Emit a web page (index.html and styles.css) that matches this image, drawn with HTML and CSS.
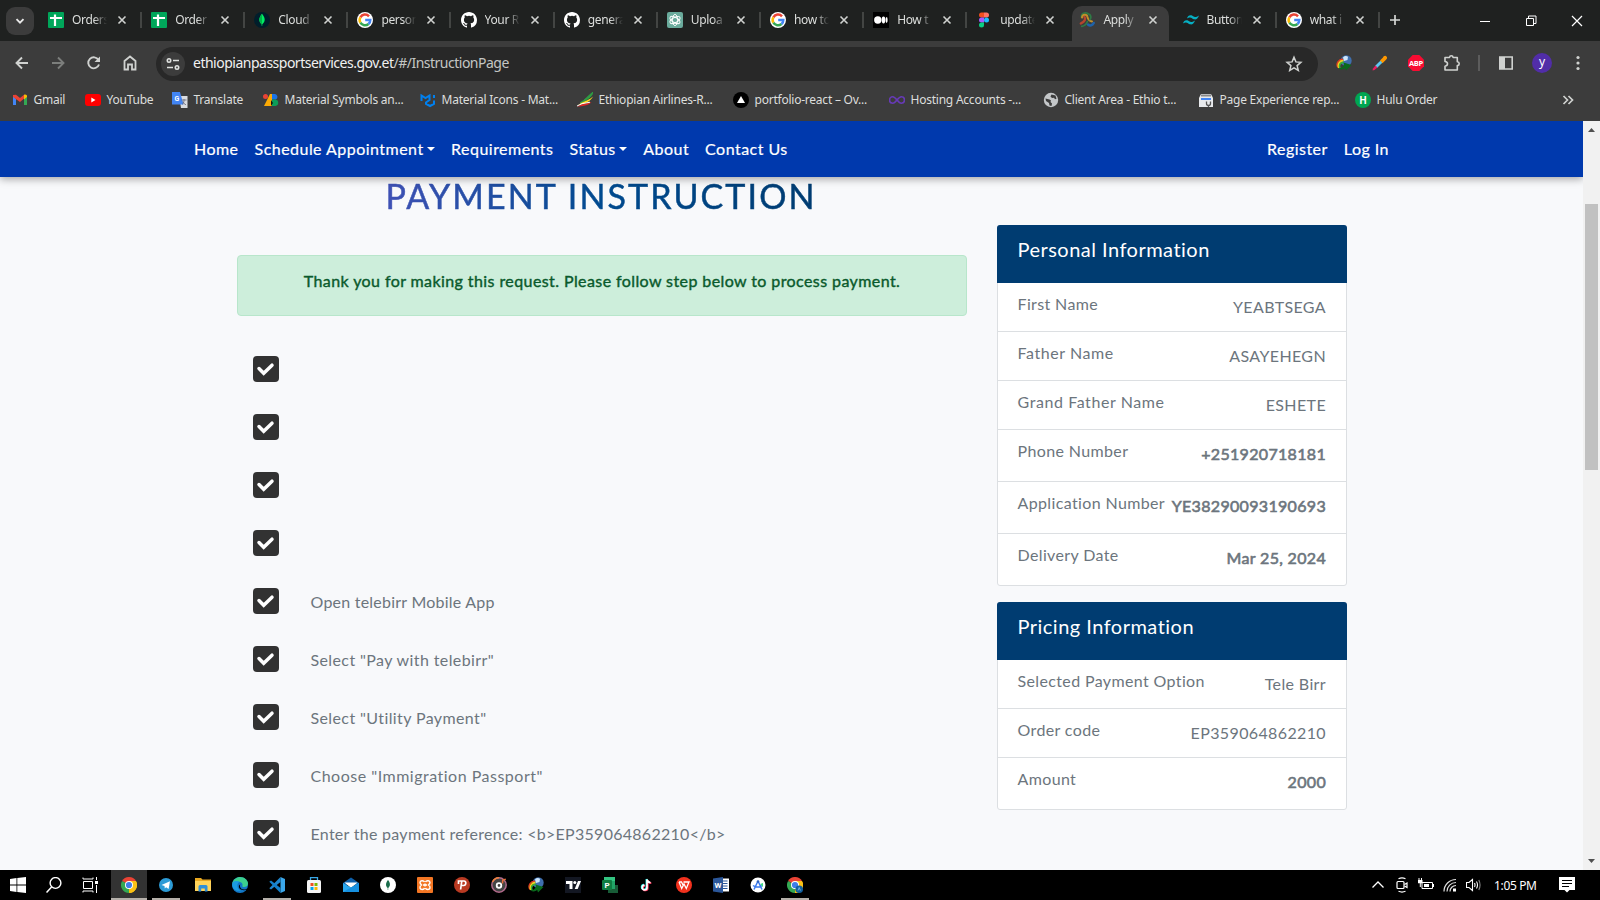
FILE: index.html
```html
<!DOCTYPE html>
<html lang="en">
<head>
<meta charset="utf-8">
<title>Apply</title>
<link rel="stylesheet" href="styles.css">
</head>
<body>
<svg class="defs" width="0" height="0">
  <symbol id="x" viewBox="0 0 10 10"><path d="M1.5 1.5l7 7M8.500 1.500l-7 7" fill="none" stroke="#d0d2d0" stroke-width="1.6"/></symbol>
  <symbol id="sheet" viewBox="0 0 16 16"><rect width="16" height="16" rx="1" fill="#00a65a"/><path d="M2 6h12M7 2.500v11.500" stroke="#fff" stroke-width="2.200"/></symbol>
  <symbol id="google" viewBox="0 0 16 16"><circle cx="8" cy="8" r="8" fill="#fff"/><g fill="none" stroke-width="2.500"><path d="M12 4.300A5.300 5.300 0 0 0 3.400 5.300" stroke="#ea4335"/><path d="M3.400 5.300A5.300 5.300 0 0 0 3.400 10.700" stroke="#fbbc05"/><path d="M3.400 10.700A5.300 5.300 0 0 0 11.500 12" stroke="#34a853"/><path d="M11.500 12A5.300 5.300 0 0 0 13.300 8H8.200" stroke="#4285f4"/></g></symbol>
  <symbol id="github" viewBox="0 0 16 16"><path fill="#fff" d="M8 0C3.580 0 0 3.580 0 8c0 3.540 2.290 6.530 5.470 7.590.4.070.55-.17.55-.38 0-.19-.01-.82-.01-1.490-2.010.37-2.530-.49-2.690-.94-.09-.23-.48-.94-.82-1.130-.28-.15-.68-.52-.01-.53.63-.01 1.080.58 1.230.82.72 1.210 1.870.87 2.330.66.070-.52.28-.87.51-1.070-1.780-.2-3.640-.89-3.640-3.950 0-.87.31-1.590.82-2.150-.08-.2-.36-1.020.08-2.120 0 0 .67-.21 2.200.82a7.400 7.400 0 0 1 4 0c1.530-1.040 2.200-.82 2.200-.82.44 1.100.16 1.920.08 2.120.51.56.82 1.270.82 2.150 0 3.070-1.870 3.750-3.650 3.950.29.25.54.73.54 1.480 0 1.070-.01 1.930-.01 2.200 0 .21.15.46.55.38A8 8 0 0 0 16 8c0-4.420-3.580-8-8-8z"/></symbol>
  <symbol id="mongo" viewBox="0 0 16 16"><circle cx="8" cy="8" r="8" fill="#001e2b"/><path d="M8 1.800c3.800 4.500 3.400 8 .2 10.600V14h-.5v-1.600C4.600 9.800 4.300 6.200 8 1.800z" fill="#00ed64"/><path d="M8 2v10.500C4.800 9.800 4.500 6.200 8 2z" fill="#00b34a"/></symbol>
  <symbol id="gpt" viewBox="0 0 16 16"><rect width="16" height="16" rx="2" fill="#6aab9c"/><g fill="none" stroke="#fff" stroke-width=".9"><ellipse cx="8" cy="8" rx="2.600" ry="5.600"/><ellipse cx="8" cy="8" rx="2.600" ry="5.600" transform="rotate(60 8 8)"/><ellipse cx="8" cy="8" rx="2.600" ry="5.600" transform="rotate(120 8 8)"/></g></symbol>
  <symbol id="medium" viewBox="0 0 16 16"><rect width="16" height="16" fill="#000"/><circle cx="4.800" cy="8" r="3.700" fill="#fff"/><ellipse cx="10.500" cy="8" rx="1.800" ry="3.400" fill="#fff"/><ellipse cx="13.600" cy="8" rx="1" ry="3" fill="#fff"/></symbol>
  <symbol id="figma" viewBox="0 0 16 16"><path d="M8 .5H5.500a2.500 2.500 0 0 0 0 5H8z" fill="#f24e1e"/><path d="M8 .5h2.500a2.500 2.500 0 0 1 0 5H8z" fill="#ff7262"/><path d="M8 5.500H5.500a2.500 2.500 0 0 0 0 5H8z" fill="#a259ff"/><circle cx="10.500" cy="8" r="2.500" fill="#1abcfe"/><path d="M8 10.500H5.500A2.500 2.500 0 1 0 8 13z" fill="#0acf83"/></symbol>
  <symbol id="apply" viewBox="0 0 16 16"><g fill="none" stroke-linecap="round" stroke-linejoin="round"><path d="M2.500 5.500C2 0 8 0 10 2.500" stroke="#2f7a45" stroke-width="1.700"/><path d="M3 5.500C3.500 2 8 2 8.500 5c.5 2.500 1 3.500 4.500 4.500" stroke="#c08f2a" stroke-width="2"/><path d="M5.500 5C7 7 6 9 1.800 11.500" stroke="#b6452d" stroke-width="2.400"/><path d="M10.800 2.500c1.500 2 1.300 3.500.2 5M2.800 14.300C6 14 7.500 12 8.500 9.500" stroke="#2f7a45" stroke-width="1.700"/><path d="M9 12.500c2 1.700 4.500 1 5.700-1.500" stroke="#1f62a8" stroke-width="2.500"/></g></symbol>
  <symbol id="tailwind" viewBox="0 0 16 16"><path d="M4 6.500C4.800 3.800 6.300 2.800 8.500 3.300c2 .5 2.500 3.700 7.500.2-1.200 3.500-3 4.300-5 3.800-2.200-.6-3-3.300-7-.8zM0 11.500c.8-2.700 2.300-3.700 4.500-3.200 2 .5 2.500 3.700 7.500.2-1.200 3.500-3 4.300-5 3.800-2.200-.6-3-3.300-7-.8z" fill="#06b0c4"/></symbol>
  <symbol id="idm" viewBox="0 0 16 16"><circle cx="10.200" cy="5.700" r="5.500" fill="#3f6fae"/><path d="M7 2.500a4 4 0 0 1 5-.8L11.500 5 8 6z" fill="#cfe6fb"/><g fill="none"><path d="M1.800 12.500C-.5 8 3 4 7 4.300" stroke="#e23a21" stroke-width="1.400"/><path d="M3 12.800C1 9 4 5.500 7.500 5.700" stroke="#f4d01c" stroke-width="1.800"/><path d="M4 13.200C2.500 10 4.500 7.300 8 7.200" stroke="#35b23a" stroke-width="1.500"/></g><path d="M2.500 13.500C5 13.500 7 12 8 9.500L7.500 7.500l8 2.500-5.500 5.500-.8-2.500C7.500 14.500 5 15 2.500 13.500z" fill="#0a6a1c"/></symbol>
  <symbol id="chrome" viewBox="0 0 16 16"><path d="M8 8L1.070 4A8 8 0 0 1 14.930 4z" fill="#ea4335"/><path d="M8 8l6.930-4A8 8 0 0 1 8 16z" fill="#fbbc05"/><path d="M8 8v8A8 8 0 0 1 1.070 4z" fill="#34a853"/><path d="M8 4h6.930A8 8 0 0 1 8 16l3.500-6z" fill="#fbc116"/><circle cx="8" cy="8" r="4" fill="#fff"/><circle cx="8" cy="8" r="3.100" fill="#3f7ee8"/></symbol>
  <symbol id="check" viewBox="0 0 26 26"><rect width="26" height="26" rx="4" fill="#323232"/><path d="M6 12.500l4.700 4.700 8.300-8" fill="none" stroke="#fff" stroke-width="3.500" stroke-linecap="round"/></symbol>
</svg>

<header class="chrome">
  <div class="tabstrip">
    <div class="tabsearch"><svg width="12" height="12" viewBox="0 0 12 12"><path d="M2.500 4.200L6 7.700l3.500-3.500" fill="none" stroke="#e8e8e8" stroke-width="1.900"/></svg></div>
    <div class="tabs">
      <div class="tab"><svg class="fav"><use href="#sheet"/></svg><span class="tt">Orders</span><svg class="tx"><use href="#x"/></svg></div>
      <div class="tab"><svg class="fav"><use href="#sheet"/></svg><span class="tt">Order</span><svg class="tx"><use href="#x"/></svg></div>
      <div class="tab"><svg class="fav"><use href="#mongo"/></svg><span class="tt">Cloud</span><svg class="tx"><use href="#x"/></svg></div>
      <div class="tab"><svg class="fav"><use href="#google"/></svg><span class="tt">person</span><svg class="tx"><use href="#x"/></svg></div>
      <div class="tab"><svg class="fav"><use href="#github"/></svg><span class="tt">Your R</span><svg class="tx"><use href="#x"/></svg></div>
      <div class="tab"><svg class="fav"><use href="#github"/></svg><span class="tt">genera</span><svg class="tx"><use href="#x"/></svg></div>
      <div class="tab"><svg class="fav"><use href="#gpt"/></svg><span class="tt">Uploa</span><svg class="tx"><use href="#x"/></svg></div>
      <div class="tab"><svg class="fav"><use href="#google"/></svg><span class="tt">how to</span><svg class="tx"><use href="#x"/></svg></div>
      <div class="tab"><svg class="fav"><use href="#medium"/></svg><span class="tt">How t</span><svg class="tx"><use href="#x"/></svg></div>
      <div class="tab nosep"><svg class="fav"><use href="#figma"/></svg><span class="tt">update</span><svg class="tx"><use href="#x"/></svg></div>
      <div class="tab active"><svg class="fav"><use href="#apply"/></svg><span class="tt">Apply</span><svg class="tx"><use href="#x"/></svg></div>
      <div class="tab"><svg class="fav"><use href="#tailwind"/></svg><span class="tt">Button</span><svg class="tx"><use href="#x"/></svg></div>
      <div class="tab"><svg class="fav"><use href="#google"/></svg><span class="tt">what i</span><svg class="tx"><use href="#x"/></svg></div>
    </div>
    <svg class="plus" width="12" height="12" viewBox="0 0 12 12"><path d="M6 1v10M1 6h10" stroke="#d5d7d5" stroke-width="1.700"/></svg>
    <div class="winctl">
      <svg width="46" height="41" viewBox="0 0 46 41"><path d="M18 21.500h10" stroke="#fff"/></svg>
      <svg width="46" height="41" viewBox="0 0 46 41"><path d="M18.500 18.500h7v7h-7zM20.500 18.500v-2.500h7.500v7.500h-2.500" fill="none" stroke="#fff"/></svg>
      <svg width="46" height="41" viewBox="0 0 46 41"><path d="M18 16l10 10M28 16L18 26" stroke="#fff" stroke-width="1.200"/></svg>
    </div>
  </div>

  <div class="toolbar">
    <svg class="tb" viewBox="0 0 36 34"><path d="M28 17H17M22 11.500L16.500 17l5.500 5.500" fill="none" stroke="#d0d2d0" stroke-width="1.900"/></svg>
    <svg class="tb" viewBox="0 0 36 34"><path d="M16 17h11M22 11.500l5.500 5.500-5.500 5.500" fill="none" stroke="#7c7e7c" stroke-width="1.900"/></svg>
    <svg class="tb" viewBox="0 0 36 34"><path d="M26.500 14A5.500 5.500 0 1 0 27 18.500" fill="none" stroke="#d0d2d0" stroke-width="1.900"/><path d="M28 10.500v5.500h-5.500z" fill="#d0d2d0"/></svg>
    <svg class="tb" viewBox="0 0 36 34"><path d="M16.500 23.500v-8.500l5.500-4.500 5.500 4.500v8.500h-3.500v-5h-4v5z" fill="none" stroke="#d0d2d0" stroke-width="1.800"/></svg>
    <div class="omnibox">
      <div class="siteinfo"><svg width="14" height="14" viewBox="0 0 14 14" fill="none" stroke="#e0e2e0" stroke-width="1.600"><circle cx="3" cy="3.500" r="1.700"/><path d="M7 3.500h6M1 10.500h6"/><circle cx="11" cy="10.500" r="1.700"/></svg></div>
      <span class="url"><b>ethiopianpassportservices.gov.et</b>/#/InstructionPage</span>
      <svg class="star" width="18" height="18" viewBox="0 0 18 18"><path d="M9 2.200l1.900 4.700 5 .4-3.800 3.300 1.200 4.900L9 12.800l-4.300 2.700 1.200-4.900L2.100 7.300l5-.4z" fill="none" stroke="#d0d2d0" stroke-width="1.500"/></svg>
    </div>
    <div class="exts">
      <svg class="ext"><use href="#idm"/></svg>
      <svg class="ext" viewBox="0 0 16 16"><path d="M14.500 1.500c-1.500-1.500-3 0-3.500 1L8 5.500l2.500 2.700 3.500-3.500c1-1 1.500-2 .5-3.200z" fill="#ff9800"/><path d="M8.300 5.800l2 2L5 13l-2-2z" fill="#5ec8f2"/><path d="M3.500 10.500l2 2-3 2.500-2 .5.500-2z" fill="#e91e63"/></svg>
      <svg class="ext" viewBox="0 0 16 16"><path d="M4.700 0h6.600L16 4.700v6.600L11.300 16H4.700L0 11.300V4.700z" fill="#f80c32"/><text x="8" y="10.700" class="abp">ABP</text></svg>
      <svg class="ext" viewBox="0 0 16 16"><path d="M1 2.500h4.500q.2-1.700 1.800-1.700t1.800 1.700h4.200v4.300q1.900.2 1.900 1.900t-1.900 1.900V15H1v-3.800q2.500-.3 2.500-2.400T1 6.500z" fill="none" stroke="#d0d2d0" stroke-width="1.600" stroke-linejoin="round"/></svg>
      <i class="bar"></i>
      <svg class="ext side" viewBox="0 0 16 16"><path d="M1.800 2h12.400v12H1.800z" fill="none" stroke="#d0d2d0" stroke-width="1.600"/><path d="M1.800 2h5.200v12H1.800z" fill="#d0d2d0"/></svg>
      <div class="avatar">y</div>
      <svg class="ext" viewBox="0 0 16 16" fill="#d0d2d0"><circle cx="8" cy="2.500" r="1.600"/><circle cx="8" cy="8" r="1.600"/><circle cx="8" cy="13.500" r="1.600"/></svg>
    </div>
  </div>

  <div class="bookmarks">
    <div class="bm"><svg viewBox="0 0 16 16"><path d="M1 3.500v9.500h3V7z" fill="#4285f4"/><path d="M15 3.500v9.500h-3V7z" fill="#34a853"/><path d="M1 3l3-.3L8 6l4-3.300 1 3L8 10 1 5z" fill="#ea4335"/><path d="M12 2.700c2-.7 3 .3 3 1.600V5l-3 2.400z" fill="#fbbc05"/></svg><span>Gmail</span></div>
    <div class="bm"><svg viewBox="0 0 16 16"><rect y="2" width="16" height="12" rx="3" fill="#f00"/><path d="M6.300 5.600L10.500 8l-4.200 2.400z" fill="#fff"/></svg><span>YouTube</span></div>
    <div class="bm"><svg viewBox="0 0 16 16"><path d="M7 4h8.500v12H9z" fill="#dadce0"/><path d="M0 0h8l3.500 12.500H0z" fill="#4285f4"/><text x="4.700" y="8.800" class="gt">G</text><path d="M9.500 8h5M12 7v1.500c0 2-1 3.500-2 4M10.800 9.500c.5 1.500 2 3 3.200 3.200" stroke="#667" stroke-width=".8" fill="none"/></svg><span>Translate</span></div>
    <div class="bm"><svg viewBox="0 0 16 16"><circle cx="2.500" cy="4.500" r="2.500" fill="#ea4335"/><path d="M1 14L7 2h2v12z" fill="#fbaa05"/><path d="M9 2h3a3 3 0 0 1 1 5.500H9z" fill="#1a73e8"/><path d="M9 7.500h3.500a3.300 3.300 0 0 1 0 6.500H9z" fill="#0d9d58"/><path d="M8 8l2 3-2 3z" fill="#111"/></svg><span>Material Symbols an...</span></div>
    <div class="bm"><svg viewBox="0 0 16 16" fill="none" stroke="#0080ef" stroke-width="2"><path d="M1.500 9V3.500l4 2.500 4-2.500V8L6 10.500v1.500l4 2 4-2.200V8.500M14 3v3"/></svg><span>Material Icons - Mat...</span></div>
    <div class="bm"><svg viewBox="0 0 16 16"><path d="M16 0C15 5 10 8 3 11 8 8 12 3 16 0z" fill="#2f9e44" stroke="#2f9e44"/><path d="M16 4.500C14 9 8 12 1 13L5 10.500c4-1.500 8-3 11-6z" fill="#ffe01b"/><path d="M14.500 10C12 13.500 5 14.500 0 14.500l5-2.500c3-.3 6-1 9.500-2z" fill="#d62828"/><path d="M0 14l5-2.300 8-1.500" fill="none" stroke="#fff"/></svg><span>Ethiopian Airlines-R...</span></div>
    <div class="bm"><svg viewBox="0 0 16 16"><circle cx="8" cy="8" r="8" fill="#000"/><path d="M8 4l4 7H4z" fill="#fff"/></svg><span>portfolio-react – Ov...</span></div>
    <div class="bm"><svg viewBox="0 0 16 16"><path d="M8 8C6 5.500 5 4.800 3.700 4.800a3.200 3.200 0 0 0 0 6.400C5 11.200 6 10.500 8 8s3-3.200 4.300-3.200a3.200 3.200 0 0 1 0 6.400C11 11.200 10 10.500 8 8z" fill="none" stroke="#673ab7" stroke-width="1.600"/></svg><span>Hosting Accounts -...</span></div>
    <div class="bm"><svg viewBox="0 0 16 16"><circle cx="8" cy="8" r="7.200" fill="#c4c7c9"/><path d="M2.500 6.500l4 1 1.500 1-.5 1.500 1.500 1.500-.5 2.500-2-.5-.5-2.500L3 9zM8.500 2.500l-1 2 1.500 1.500 2-.3 1 1.500 1.500-.5-1-3.200z" fill="#3c3c3c"/></svg><span>Client Area - Ethio t...</span></div>
    <div class="bm"><svg viewBox="0 0 16 16"><path d="M3 2h10l2 4v9H1V6z" fill="#e8eaed"/><path d="M3 2.500h10v2H3z" fill="#888"/><path d="M3 6h10v2H3z" fill="#4285f4"/><path d="M8.500 9.500v2a2 2 0 0 0 4 0v-2M10.500 13v2" fill="none" stroke="#555" stroke-width="1.300"/></svg><span>Page Experience rep...</span></div>
    <div class="bm"><svg viewBox="0 0 16 16"><circle cx="8" cy="8" r="8" fill="#00a651"/><text x="8" y="11.700" class="hh">H</text></svg><span>Hulu Order</span></div>
    <svg class="more" width="12" height="10" viewBox="0 0 12 10"><path d="M1.500 1l4 4-4 4M6.500 1l4 4-4 4" fill="none" stroke="#d0d2d0" stroke-width="1.700"/></svg>
  </div>
</header>

<div class="viewport">
  <div class="page">
    <nav class="nav">
      <div class="left"><a>Home</a><a class="drop">Schedule Appointment</a><a>Requirements</a><a class="drop">Status</a><a>About</a><a>Contact Us</a></div>
      <div class="right"><a>Register</a><a>Log In</a></div>
    </nav>
    <div class="content">
      <main>
        <h1><span>PAYMENT INSTRUCTION</span></h1>
        <div class="alert"><span>Thank you for making this request. Please follow step below to process payment.</span></div>
        <ul class="steps">
          <li><svg><use href="#check"/></svg></li>
          <li><svg><use href="#check"/></svg></li>
          <li><svg><use href="#check"/></svg></li>
          <li><svg><use href="#check"/></svg></li>
          <li class="tight"><svg><use href="#check"/></svg><span>Open telebirr Mobile App</span></li>
          <li><svg><use href="#check"/></svg><span>Select "Pay with telebirr"</span></li>
          <li><svg><use href="#check"/></svg><span>Select "Utility Payment"</span></li>
          <li class="loose"><svg><use href="#check"/></svg><span>Choose "Immigration Passport"</span></li>
          <li class="snug"><svg><use href="#check"/></svg><span>Enter the payment reference: &lt;b&gt;EP359064862210&lt;/b&gt;</span></li>
        </ul>
      </main>
      <aside>
        <section class="card">
          <h2>Personal Information</h2>
          <div class="row"><span>First Name</span><em>YEABTSEGA</em></div>
          <div class="row"><span class="loose">Father Name</span><em>ASAYEHEGN</em></div>
          <div class="row"><span class="loose">Grand Father Name</span><em>ESHETE</em></div>
          <div class="row tall"><span>Phone Number</span><strong>+251920718181</strong></div>
          <div class="row tall"><span>Application Number</span><strong>YE38290093190693</strong></div>
          <div class="row tall"><span>Delivery Date</span><strong>Mar 25, 2024</strong></div>
        </section>
        <section class="card">
          <h2>Pricing Information</h2>
          <div class="row"><span>Selected Payment Option</span><em>Tele Birr</em></div>
          <div class="row"><span>Order code</span><em>EP359064862210</em></div>
          <div class="row tall"><span>Amount</span><strong>2000</strong></div>
        </section>
      </aside>
    </div>
  </div>
  <div class="scroll">
    <svg width="17" height="17" viewBox="0 0 17 17"><path d="M5 11h7L8.500 7z" fill="#505050"/></svg>
    <div class="track"><div class="thumb"></div></div>
    <svg width="17" height="17" viewBox="0 0 17 17"><path d="M5 6h7l-3.500 4z" fill="#505050"/></svg>
  </div>
</div>

<footer class="taskbar">
  <div class="sys">
    <svg viewBox="0 0 16 16"><path d="M0 2l6.500-1v6.500H0zM7.300.9L16 0v7.500H7.300zM0 8.500h6.500V15L0 14zM7.300 8.500H16V16l-8.700-1.100z" fill="#fff"/></svg>
    <svg viewBox="0 0 16 16"><circle cx="9.500" cy="6" r="5.400" fill="none" stroke="#fff" stroke-width="1.400"/><path d="M5.600 10L.5 15.500" stroke="#fff" stroke-width="1.500"/></svg>
    <svg viewBox="0 0 16 16" fill="none" stroke="#fff"><path d="M1.500 4.500h9v7h-9zM1 .5v1.500h10V.5M1 15.500V14h10v1.500M14.500 0v3M14.500 8v8"/><path d="M13 4h3v3h-3z" fill="#fff" stroke="none"/></svg>
  </div>
  <div class="apps">
    <div class="app on"><svg><use href="#chrome"/></svg></div>
    <div class="app run"><svg viewBox="0 0 16 16"><circle cx="8" cy="8" r="7" fill="#2c9bd6"/><path d="M3.500 8l8.500-3.700-1.400 7.700-2.500-1.800-1.300 1.300-.3-2.500z" fill="#fff"/></svg></div>
    <div class="app"><svg viewBox="0 0 16 16"><path d="M0 1h6l1.500 1.500H16V14H0z" fill="#e9a820"/><path d="M0 4h16v10H0z" fill="#ffd35a"/><path d="M3.500 14.500V9.500q0-1.500 1.500-1.500h6q1.500 0 1.500 1.500v5h-2.700V11.500H6.200v3z" fill="#2f8fd8"/></svg></div>
    <div class="app"><svg viewBox="0 0 16 16"><circle cx="8" cy="8" r="8" fill="#1277c7"/><path d="M.2 7C1 2 5 0 8 0c5 0 8 3.500 8 6.500 0 2.500-2 3.500-4 3.500-1.500 0-2-.6-1.500-1.500C11 7 9.500 5 7 4.800 4 4.500 1 5 .2 7z" fill="#3bcf8e"/><path d="M.3 6.500C2 3 6 4 7.500 5 4.500 6 4.500 12 9 13.500 3 15-.5 11 .3 6.500z" fill="#1b9de2"/><path d="M8.500 7c-1.500 2 0 5.500 3.500 5.500 1.500 0 2.500-.5 3.500-1l-.8 1.200C11 14 6 12.500 7 8.500z" fill="#000"/></svg></div>
    <div class="app run"><svg viewBox="0 0 16 16"><path d="M11.500 0L16 2v12l-4.500 2z" fill="#3ba7ea"/><path d="M11.500 0v5L2 12.500.3 11.200z" fill="#1f87ce"/><path d="M11.500 16v-5L2 3.500.3 4.800z" fill="#1480cc"/></svg></div>
    <div class="app"><svg viewBox="0 0 16 16"><path d="M4.500 3.500V.7h7v2.800" fill="none" stroke="#38a8e8" stroke-width="1.300"/><rect x="1" y="3" width="14" height="13" rx="1.500" fill="#f4f4f4"/><path d="M4.500 6h3v3h-3z" fill="#f25022"/><path d="M8.500 6h3v3h-3z" fill="#7fba00"/><path d="M4.500 10h3v3h-3z" fill="#00a4ef"/><path d="M8.500 10h3v3h-3z" fill="#ffb900"/></svg></div>
    <div class="app"><svg viewBox="0 0 16 16"><path d="M0 6l8-5.500L16 6v2H0z" fill="#0d5ea8"/><path d="M1.500 5.500h13L8 11z" fill="#fff"/><path d="M0 6l8 4.500L16 6v9H0z" fill="#2aa8ef"/><path d="M0 15h16V6z" fill="#1690e0"/></svg></div>
    <div class="app"><svg viewBox="0 0 16 16"><circle cx="8" cy="8" r="8" fill="#fff"/><path d="M8 3c2.600 3 2.500 6 .2 8V13h-.5v-2C5.400 9 5.500 6 8 3z" fill="#176b4a"/></svg></div>
    <div class="app"><svg viewBox="0 0 16 16"><rect width="16" height="16" rx="1" fill="#f37623"/><path d="M8 6.500v3M7.500 5c-1-2-4.500-1.500-4.500.5 0 1 .5 1.500 1.500 2.500C3 9 2.800 9.500 3 11c.5 2 4 2 4.500 0M8.500 5c1-2 4.500-1.500 4.500.5 0 1-.5 1.500-1.500 2.500 1.500 1 1.700 1.500 1.500 3-.5 2-4 2-4.500 0M6 8h4" fill="none" stroke="#fff" stroke-width="1.400"/></svg></div>
    <div class="app"><svg viewBox="0 0 16 16"><circle cx="8" cy="8" r="8" fill="#b93a22"/><path d="M4.500 7V4h5.500c2.700 0 2.200 4.500-.3 4.500H8M7.800 4l-1.200 8.500" fill="none" stroke="#fff" stroke-width="1.700"/></svg></div>
    <div class="app"><svg viewBox="0 0 16 16"><circle cx="8" cy="8" r="7.200" fill="#444" stroke="#b16a8b" stroke-width="1.500"/><path d="M1.500 5A7.200 7.200 0 0 1 8 .8" stroke="#f0823c" stroke-width="1.500" fill="none"/><circle cx="8" cy="8.500" r="2.300" fill="none" stroke="#fff" stroke-width="1.800"/><path d="M11.500 6.500l.3-3.500 3-.8" stroke="#e96f3a" stroke-width="1.500" fill="none"/></svg></div>
    <div class="app"><svg><use href="#idm"/></svg></div>
    <div class="app"><svg viewBox="0 0 16 16"><path d="M0 0h16v16H0z" fill="#131722"/><path d="M1 4h6.500v8H4.500V7H1zM13 4h3l-3.300 8h-3z" fill="#fff"/><circle cx="9.800" cy="5.500" r="1.500" fill="#fff"/></svg></div>
    <div class="app"><svg viewBox="0 0 16 16"><path d="M2 0h11v10H2z" fill="#33c481"/><path d="M11 8h5v8H6v-4h5z" fill="#185c37"/><path d="M9 4h4v8H9z" fill="#21a366"/><rect y="3" width="10" height="10" rx="1" fill="#107c41"/><text x="5" y="11" class="ic">P</text></svg></div>
    <div class="app"><svg viewBox="0 0 16 16"><g fill="none" stroke-width="1.700"><path d="M8 2.500v8a2.400 2.400 0 1 1-2.500-2.400M8 2.500c.3 2 1.500 3 3.500 3" stroke="#25f4ee" transform="translate(-.6 -.5)"/><path d="M8 2.500v8a2.400 2.400 0 1 1-2.500-2.400M8 2.500c.3 2 1.500 3 3.500 3" stroke="#fe2c55" transform="translate(.8 .6)"/><path d="M8 2.500v8a2.400 2.400 0 1 1-2.500-2.400M8 2.500c.3 2 1.500 3 3.500 3" stroke="#fff"/></g></svg></div>
    <div class="app"><svg viewBox="0 0 16 16"><circle cx="8" cy="8" r="8" fill="#f2311d"/><path d="M3 5l2.700 6.500L8 7l2.300 4.500L13 5H7.500M3 5h2.500l1.700 3.500" fill="none" stroke="#fff" stroke-width="1.300"/></svg></div>
    <div class="app"><svg viewBox="0 0 16 16"><path d="M8 1.500h8v13H8z" fill="#fff"/><path d="M9.500 4H14.500M9.500 6.500H14.500M9.500 9H14.500M9.500 11.500H14.500" stroke="#2b579a"/><path d="M0 1.500L10 0v16L0 14.500z" fill="#2b579a"/><text x="5" y="11" class="ic">W</text></svg></div>
    <div class="app"><svg viewBox="0 0 16 16"><circle cx="8" cy="8" r="7.500" fill="#fff"/><path d="M8 4L4 12.500M8 4l4 8.500M3 8.500c2.500 2 7 2 9.500 0" fill="none" stroke="#3a7af0" stroke-width="1.500"/><circle cx="8" cy="4.500" r="1.300" fill="#2c62c0"/><path d="M10 7l3-1v4z" fill="#3ddc84"/></svg></div>
    <div class="app run"><svg viewBox="0 0 16 16"><use href="#chrome"/><circle cx="12.200" cy="12.200" r="3.800" fill="#12609f"/><path d="M11 13.500l1.200-3 1.200 3" fill="none" stroke="#7fc0f0" stroke-width=".8"/></svg></div>
  </div>
  <div class="tray">
    <svg viewBox="0 0 16 16"><path d="M2.500 10.500L8 5l5.500 5.500" fill="none" stroke="#fff" stroke-width="1.300"/></svg>
    <svg viewBox="0 0 16 16" fill="none" stroke="#fff" stroke-width="1.200"><rect x="3" y="4.500" width="7" height="7" rx="1"/><path d="M10.500 7.500l2.500-1.500v4.500l-2.500-1.500M4.500 1.700q3.500-1.500 7 0M4.500 14.300q3.500 1.500 7 0"/></svg>
    <svg viewBox="0 0 16 16"><path d="M4 5.500h10.500v6H4zM15.500 7v3" fill="none" stroke="#fff"/><path d="M6 7h5v3H6zM0 3h4.500v3.200H0z" fill="#fff"/><path d="M1 1v2M3.500 1v2M2.300 6v4" stroke="#fff"/></svg>
    <svg viewBox="0 0 16 16" fill="none" stroke="#ddd" stroke-width="1.200"><path d="M2 14.500A12 12 0 0 1 14 2.500M5 14.500A9 9 0 0 1 14 5.500M8 14.500A6 6 0 0 1 14 8.500"/><path d="M11 11.500h3v3h-3z" fill="#fff" stroke="none"/></svg>
    <svg viewBox="0 0 16 16" fill="none" stroke="#fff" stroke-width="1.100"><path d="M.5 5.500h2.500l3.500-3v11l-3.500-3H.5zM8.500 6q1 2 0 4M10.500 4.500q2 3.500 0 7"/><path d="M12.800 3q2.500 5 0 10" stroke="#888"/></svg>
    <span class="clock">1:05 PM</span>
    <svg class="note" viewBox="0 0 16 16"><path d="M0 0h16v13h-5.500L8 15.500 5.500 13H0z" fill="#fff"/><path d="M3 3.500h10M3 6.500h10M3 9.500h7" stroke="#000"/></svg>
  </div>
</footer>
</body>
</html>
```
FILE: styles.css
```css
* { box-sizing: border-box; }
body { margin: 0; width: 1600px; height: 900px; overflow: hidden; display: flex; flex-direction: column; font-family: "Noto Sans", sans-serif; background: #f8f9fb; }
svg { display: block; flex: none; }
.defs { position: absolute; }

.chrome { height: 121px; flex: none; background: #3c3c3c; color: #dcdedc; display: flex; flex-direction: column; }
.tabstrip { height: 41px; flex: none; background: #1f2120; display: flex; align-items: center; }
.tabsearch { width: 28px; height: 28px; margin-left: 6px; border-radius: 9px; background: #3c3c3c; display: flex; align-items: center; justify-content: center; }
.tabs { display: flex; height: 40px; margin: 0 0 1px 6px; width: 1341px; }
.tab { width: 103.15px; flex: none; height: 40px; padding-left: 8px; display: flex; align-items: center; position: relative; }
.tab::after { content: ""; width: 2px; height: 16px; background: #434543; margin-left: 13px; }
.tab.nosep::after, .tab.active::after { visibility: hidden; }
.fav { width: 16px; height: 16px; }
/* the label fades out before the close button */
.tt { width: 40px; margin-left: 8px; font-size: 12px; line-height: 20px; height: 20px; white-space: nowrap; overflow: hidden; letter-spacing: -.35px; -webkit-mask-image: linear-gradient(90deg, #000 22px, transparent 35px); }
.tx { width: 10px; height: 10px; margin-left: 5px; }
.tab.active::before { content: ""; position: absolute; left: 1px; top: 6px; width: 97px; height: 35px; background: #3c3c3c; border-radius: 10px 10px 0 0; z-index: 0; }
.tab.active > * { position: relative; z-index: 1; }
.plus { margin: 0 0 1px 7.500px; }
.winctl { display: flex; margin: 0 0 1px auto; }

.toolbar { height: 47px; flex: none; padding-top: 6px; display: flex; align-items: flex-start; }
.tb { width: 36px; height: 34px; margin-top: -1px; }
.omnibox { flex: none; margin-left: 12px; width: 1162px; height: 34px; border-radius: 17px; background: #282828; display: flex; align-items: center; padding: 0 15px 1px 5px; }
.siteinfo { width: 24px; height: 24px; border-radius: 50%; background: #3c3c3c; display: flex; align-items: center; justify-content: center; }
.url { margin: 0 0 1px 8px; font-size: 14px; line-height: 20px; letter-spacing: -.5px; color: #c4c6c4; white-space: nowrap; }
.url b { font-weight: 400; color: #f0f0f0; }
.star { margin-left: auto; }
.exts { display: flex; flex: none; width: 264px; align-items: center; height: 32px; margin-left: 18px; }
.ext { width: 16px; height: 16px; margin-right: 20px; }
.bar { width: 2px; height: 16px; flex: none; background: #5c5c5c; margin: 0 18px 0 -2px; }
.side { margin-right: 18px; }
.avatar { width: 20px; height: 20px; flex: none; border-radius: 50%; background: #512da8; color: #fff; font-size: 12px; line-height: 18px; text-align: center; margin-right: 18px; }
.abp { font: bold 7.500px "Open Sans", sans-serif; letter-spacing: -.3px; fill: #fff; text-anchor: middle; }
.gt { font: bold 7px Roboto, sans-serif; fill: #fff; text-anchor: middle; }
.hh { font: bold 10px Roboto, sans-serif; fill: #fff; text-anchor: middle; }
.ic { font: bold 8px Roboto, sans-serif; fill: #fff; text-anchor: middle; }

.bookmarks { height: 32px; margin-top: -4px; padding-left: 12px; display: grid; grid-template-columns: 73px 87px 91px 157px 157px 156px 156px 154px 155px 157px 1fr 38px; align-items: center; }
.bm { display: flex; align-items: center; gap: 5.500px; font-size: 12px; line-height: 18px; letter-spacing: -.23px; white-space: nowrap; }
.bm svg { width: 16px; height: 16px; }

.viewport { height: 749px; display: flex; flex: none; }
.page { width: 1583px; overflow: hidden; font-family: Lato, sans-serif; color: #6c757d; background: #f8f9fb; }
.nav { position: relative; z-index: 2; height: 56px; padding: 0 194px 2px; background: #0039ad; display: flex; justify-content: space-between; align-items: center; box-shadow: 0 2px 8px rgba(0,0,0,.35); color: #fff; font-size: 16px; }
.left, .right { display: flex; gap: 16px; }
.nav a { white-space: nowrap; letter-spacing: .47px; -webkit-text-stroke: .2px #fff; }
.drop::after { content: ""; display: inline-block; margin-left: 3.500px; vertical-align: 4px; border: 4px solid transparent; border-top-color: #fff; border-bottom: 0; }
.content { display: flex; padding-left: 237px; gap: 30px; }
main { width: 730px; }
h1 { margin: 0; height: 78px; padding-right: 2px; text-align: center; font-weight: 400; font-size: 34px; line-height: 38px; letter-spacing: 2.100px; white-space: nowrap; }
h1 span { background: linear-gradient(90deg, #3f51b5, #004a8f 50%, #003c71); -webkit-background-clip: text; color: transparent; -webkit-text-stroke: .5px transparent; }
.alert { height: 61px; border: 1px solid #b8e6cb; border-radius: 4px; background: #cdeedb; color: #0a5a2c; text-align: center; padding-top: 14px; font-size: 16px; line-height: 22px; letter-spacing: .41px; -webkit-text-stroke: .4px #0a5a2c; white-space: nowrap; }
.steps { list-style: none; margin: 40px 0 0; padding: 0 0 0 16px; }
.steps li { height: 58px; display: flex; align-items: flex-start; font-size: 16px; line-height: 26px; letter-spacing: .39px; }
.steps svg { width: 26px; height: 26px; }
.steps span { margin: 1px 0 0 31.500px; white-space: nowrap; }
.steps .tight { letter-spacing: .23px; }
.steps .snug { letter-spacing: .28px; }
.steps .loose { letter-spacing: .5px; }
aside { width: 350px; padding-top: 48px; }
.card { margin-bottom: 16px; border: 1px solid #dcdfe2; border-radius: 3px; background: #fff; }
h2 { margin: -1px -1px 0; height: 58px; padding: 12px 20.500px; background: #003c71; color: #fff; border-radius: 3px 3px 0 0; font-weight: 400; font-size: 20px; line-height: 24px; letter-spacing: .48px; }
.row { height: 49px; border-bottom: 1px solid #dcdfe2; padding: 9px 20px 0 19.500px; display: flex; justify-content: space-between; font-size: 16px; line-height: 24px; letter-spacing: .37px; white-space: nowrap; }
.row.tall { height: 52px; }
.row.tall:last-child { border-bottom: 0; height: 51px; }
.row .loose { letter-spacing: .58px; }
.row em, .row strong { font-style: normal; margin-top: 3px; font-weight: 400; }
.row strong { letter-spacing: .32px; -webkit-text-stroke: .6px #6c757d; }

.scroll { width: 17px; background: #f1f1f1; display: flex; flex-direction: column; }
.track { flex: 1; padding: 66px 2px 0; }
.thumb { height: 266px; background: #c1c1c1; }

.taskbar { height: 30px; background: #000; display: flex; flex: none; }
.taskbar svg { width: 16px; height: 16px; }
.sys { display: flex; align-items: center; gap: 20px; padding-left: 10px; width: 111px; }
.apps { display: flex; }
.app { width: 36px; height: 30px; margin-right: 1px; display: flex; align-items: center; justify-content: center; }
.app.on { background: #333; border-bottom: 2px solid #b5b0aa; padding-top: 2px; }
.app.run { background: linear-gradient(#b5b0aa, #b5b0aa) 4px 28px / 28px 2px no-repeat; }
.tray { margin-left: auto; display: flex; align-items: center; gap: 8px; padding-right: 25px; color: #fff; }
.clock { font-size: 12px; letter-spacing: -.35px; width: 45px; margin-left: 4px; white-space: nowrap; }
.note { margin-left: 12px; }
```
